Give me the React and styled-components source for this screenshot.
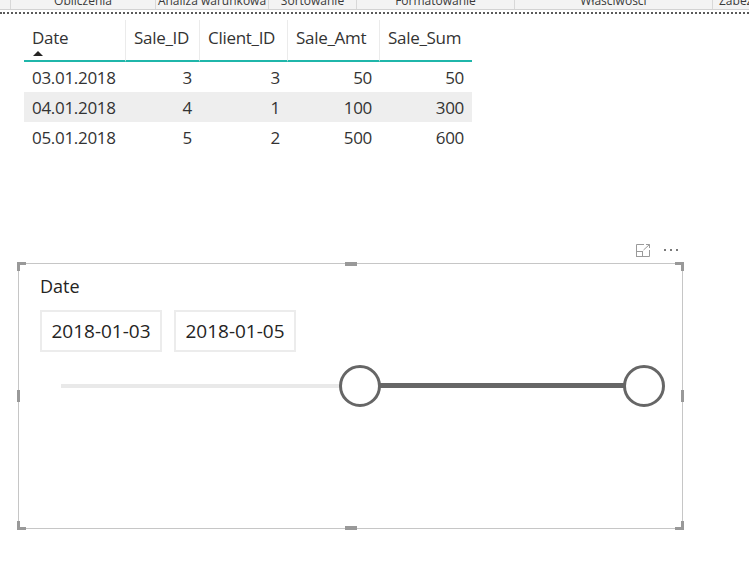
import React from 'react';
import styled, { createGlobalStyle } from 'styled-components';

const GlobalStyle = createGlobalStyle`
	body {
		margin: 0;
		background: #fff;
		font-family: "Segoe UI", "Open Sans", sans-serif;
		color: #252423;
	}
`;

const tabs = [
	{ label: "", width: 10 },
	{ label: "Obliczenia", width: 145 },
	{ label: "Analiza warunkowa", width: 113 },
	{ label: "Sortowanie", width: 88 },
	{ label: "Formatowanie", width: 158 },
	{ label: "Właściwości", width: 198 },
	{ label: "Zabezpieczenia", width: 120, left: true },
];

const columns = [
	{ name: "Date", width: 102, sorted: true, left: true },
	{ name: "Sale_ID", width: 74 },
	{ name: "Client_ID", width: 88 },
	{ name: "Sale_Amt", width: 92 },
	{ name: "Sale_Sum", width: 92 },
];

const rows = [
	["03.01.2018", "3", "3", "50", "50"],
	["04.01.2018", "4", "1", "100", "300"],
	["05.01.2018", "5", "2", "500", "600"],
];

const range = { start: 51.3, end: 100 };

const FocusIcon = () => (
	<svg width="15" height="13" viewBox="0 0 15 13" fill="none" stroke="#9a9a9a" strokeWidth="1">
		<polyline points="8,0.5 0.5,0.5 0.5,12.5 13.5,12.5 13.5,6" />
		<rect x="0.5" y="7.5" width="6" height="5" />
		<line x1="7.5" y1="6" x2="13.5" y2="0.5" />
		<polyline points="10,0.5 13.5,0.5 13.5,4" />
	</svg>
);

const App = () => {
	return (
		<Page>
			<GlobalStyle />
			<Ribbon>
				{tabs.map((tab, index) => (
					<RibbonTab key={index} $width={tab.width} $left={tab.left} $first={index === 0}>
						<span>{tab.label}</span>
					</RibbonTab>
				))}
			</Ribbon>
			<Dotted />
			<Canvas>
				<Table $cols={columns.map(c => c.width + 'px').join(' ')}>
					{columns.map((col, index) => (
						<HeadCell key={col.name} $left={col.left} $last={index === columns.length - 1}>
							<span>{col.name}</span>
							{col.sorted && <SortArrow />}
						</HeadCell>
					))}
					{rows.map((row, r) => row.map((value, c) => (
						<Cell key={r + '-' + c} $left={c === 0} $alt={r === 1}>
							{value}
						</Cell>
					)))}
				</Table>

				<Visual>
					<VisualHeader>
						<FocusIcon />
						<Dots>
							<i /><i /><i />
						</Dots>
					</VisualHeader>
					<SlicerBox>
						<Handle $pos="tl" />
						<Handle $pos="tr" />
						<Handle $pos="bl" />
						<Handle $pos="br" />
						<MidHandle $pos="top" />
						<MidHandle $pos="bottom" />
						<MidHandle $pos="left" />
						<MidHandle $pos="right" />
						<SlicerTitle>Date</SlicerTitle>
						<DateInputs>
							<DateInput>2018-01-03</DateInput>
							<DateInput>2018-01-05</DateInput>
						</DateInputs>
						<Slider>
							<Track />
							<ActiveTrack style={{ left: range.start + '%', width: (range.end - range.start) + '%' }} />
							<Knob style={{ left: range.start + '%' }} />
							<Knob style={{ left: range.end + '%' }} />
						</Slider>
					</SlicerBox>
				</Visual>
			</Canvas>
		</Page>
	);
};

const Page = styled.div`
	width: 749px;
	height: 579px;
	overflow: hidden;
`;

const Ribbon = styled.div`
	display: flex;
	height: 9px;
	overflow: hidden;
	background: #f3f3f3;
	border-bottom: 1px solid #d2d2d2;
`;

const RibbonTab = styled.div`
	flex: 0 0 ${props => props.$width}px;
	display: flex;
	align-items: flex-end;
	justify-content: ${props => props.$left ? 'flex-start' : 'center'};
	padding-left: ${props => props.$left ? '6px' : '0'};
	box-sizing: border-box;
	border-left: ${props => props.$first ? 'none' : '1px solid #d8d8d8'};
	white-space: nowrap;

	span {
		font-size: 12px;
		line-height: 12px;
		margin-bottom: 2px;
		color: #3a3a3a;
	}
`;

const Dotted = styled.div`
	margin-top: 2px;
	border-top: 2px dotted #5a5a5a;
`;

const Canvas = styled.div`
	padding: 6px 0 0 18px;
`;

const Table = styled.div`
	display: grid;
	grid-template-columns: ${props => props.$cols};
	margin-left: 6px;
	width: 448px;
`;

const HeadCell = styled.div`
	position: relative;
	height: 42px;
	padding: 6px 8px 0 8px;
	box-sizing: border-box;
	border-bottom: 2px solid #1fb6aa;
	border-right: ${props => props.$last ? 'none' : '1px solid #ebebeb'};
	font-size: 17px;
	letter-spacing: -0.3px;
	line-height: 24px;
	color: #333;
	white-space: nowrap;
`;

const SortArrow = styled.div`
	position: absolute;
	left: 9px;
	top: 31px;
	width: 0;
	height: 0;
	border-left: 5px solid transparent;
	border-right: 5px solid transparent;
	border-bottom: 5px solid #252423;
`;

const Cell = styled.div`
	height: 30px;
	padding: 0 8px;
	box-sizing: border-box;
	display: flex;
	align-items: center;
	justify-content: ${props => props.$left ? 'flex-start' : 'flex-end'};
	background: ${props => props.$alt ? '#eeeeee' : '#fff'};
	font-size: 17px;
	letter-spacing: -0.3px;
	color: #333;
`;

const Visual = styled.div`
	width: 665px;
	margin-top: 91px;
`;

const VisualHeader = styled.div`
	height: 14px;
	margin-bottom: 6px;
	padding-right: 5px;
	display: flex;
	align-items: center;
	justify-content: flex-end;
	gap: 13px;
`;

const Dots = styled.div`
	display: flex;
	gap: 4px;

	i {
		display: block;
		width: 2px;
		height: 2px;
		background: #7a7a7a;
	}
`;

const SlicerBox = styled.div`
	position: relative;
	height: 266px;
	box-sizing: border-box;
	border: 1px solid #c6c6c6;
	padding: 10px 21px 0 21px;
`;

const cornerPlace = {
	tl: 'top: -2px; left: -2px; border-width: 3px 0 0 3px;',
	tr: 'top: -2px; right: -2px; border-width: 3px 3px 0 0;',
	bl: 'bottom: -2px; left: -2px; border-width: 0 0 3px 3px;',
	br: 'bottom: -2px; right: -2px; border-width: 0 3px 3px 0;',
};

const Handle = styled.div`
	position: absolute;
	width: 6px;
	height: 6px;
	border-style: solid;
	border-color: #999;
	${props => cornerPlace[props.$pos]}
`;

const midPlace = {
	top: 'top: -2px; left: 50%; margin-left: -6px; width: 12px; height: 4px;',
	bottom: 'bottom: -2px; left: 50%; margin-left: -6px; width: 12px; height: 4px;',
	left: 'left: -2px; top: 50%; margin-top: -6px; width: 3px; height: 12px;',
	right: 'right: -2px; top: 50%; margin-top: -6px; width: 3px; height: 12px;',
};

const MidHandle = styled.div`
	position: absolute;
	background: #999;
	${props => midPlace[props.$pos]}
`;

const SlicerTitle = styled.div`
	font-size: 18px;
	line-height: 24px;
	color: #252423;
`;

const DateInputs = styled.div`
	display: flex;
	gap: 12px;
	margin-top: 12px;
`;

const DateInput = styled.div`
	width: 122px;
	height: 42px;
	box-sizing: border-box;
	border: 2px solid #ececec;
	display: flex;
	align-items: center;
	justify-content: center;
	font-size: 19px;
	color: #252423;
`;

const Slider = styled.div`
	position: relative;
	margin: 14px 0 0 21px;
	width: 583px;
	height: 40px;
`;

const Track = styled.div`
	position: absolute;
	left: 0;
	right: 0;
	top: 18px;
	height: 4px;
	background: #e9e9e9;
`;

const ActiveTrack = styled.div`
	position: absolute;
	top: 17px;
	height: 5px;
	background: #666;
`;

const Knob = styled.div`
	position: absolute;
	top: -1px;
	width: 42px;
	height: 42px;
	margin-left: -21px;
	box-sizing: border-box;
	border: 3px solid #666;
	border-radius: 50%;
	background: #fff;
`;

export default App;
